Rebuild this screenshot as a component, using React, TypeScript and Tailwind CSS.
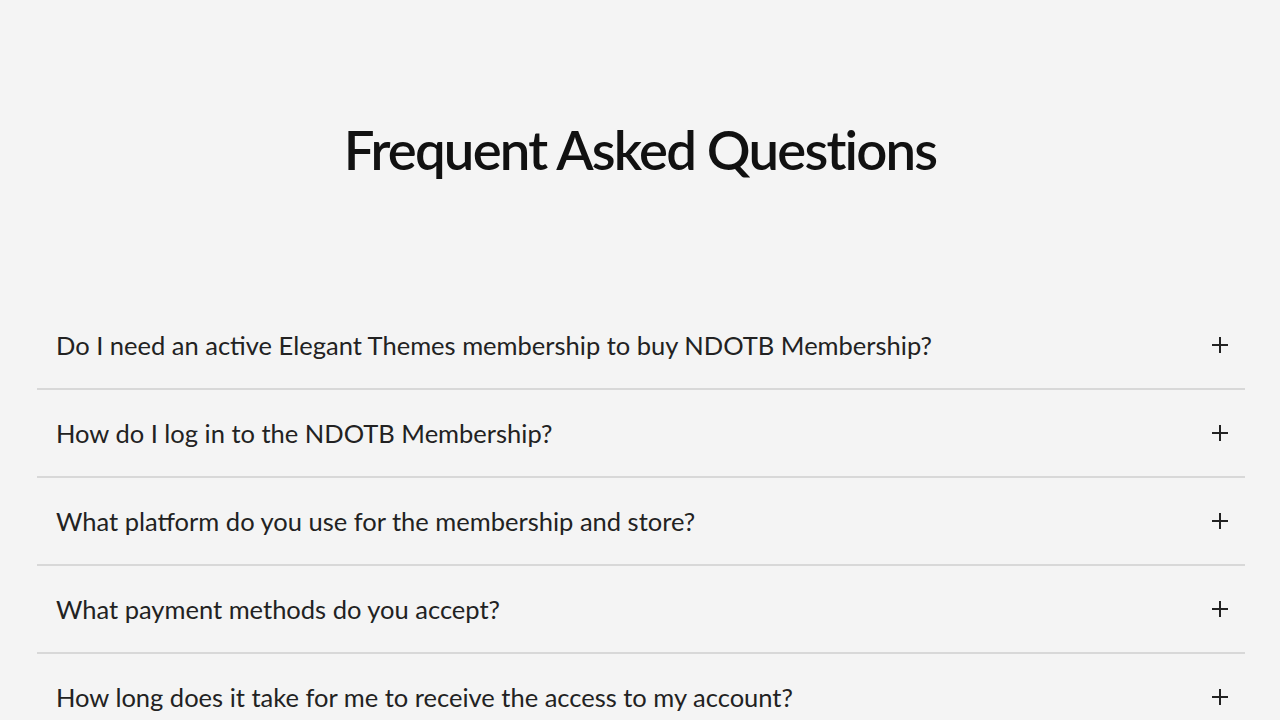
import React from "react";

const questions = [
  "Do I need an active Elegant Themes membership to buy NDOTB Membership?",
  "How do I log in to the NDOTB Membership?",
  "What platform do you use for the membership and store?",
  "What payment methods do you accept?",
  "How long does it take for me to receive the access to my account?",
];

function Plus() {
  return (
    <svg width="18" height="18" viewBox="0 0 18 18" className="shrink-0">
      <path d="M9 1v16M1 9h16" stroke="#222" strokeWidth="2" />
    </svg>
  );
}

export default function App() {
  return (
    <div
      className="min-h-[720px] w-full bg-[#f4f4f4] overflow-hidden"
      style={{ fontFamily: "Lato, 'Open Sans', sans-serif" }}
    >
      <h1 className="pt-[114px] h-[185px] text-center text-[54.5px] leading-[70px] font-semibold text-[#111] tracking-[-1.8px]">
        Frequent Asked Questions
      </h1>
      <div className="ml-[37px] mr-[35px] mt-[117px]">
        {questions.map((q) => (
          <div
            key={q}
            className="flex items-center justify-between h-[88px] pl-[19px] pr-[16px] border-b-2 border-[#d8d8d8]"
          >
            <span className="text-[25.5px] text-[#222]">{q}</span>
            <Plus />
          </div>
        ))}
      </div>
    </div>
  );
}
